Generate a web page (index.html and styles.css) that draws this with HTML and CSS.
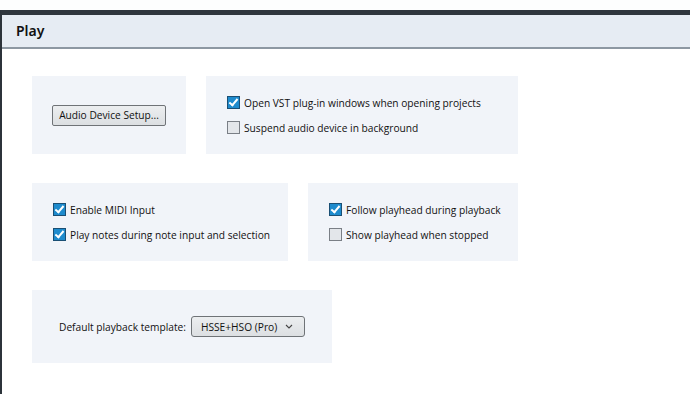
FILE: index.html
```html
<!DOCTYPE html>
<html lang="en">
<head>
    <meta name="viewport" content="width=device-width, initial-scale=1">
    <title>Preferences - Play</title>
    <link rel="stylesheet" href="styles.css">
</head>
<body>
    <div class="topstrip"></div>
    <div class="window">
        <div class="header">Play</div>
        <div class="content">
            <div class="row">
                <div class="card card-device">
                    <button class="btn" type="button">Audio Device Setup...</button>
                </div>
                <div class="card card-vst">
                    <label class="check"><span class="box on"></span>Open VST plug-in windows when opening projects</label>
                    <label class="check"><span class="box"></span>Suspend audio device in background</label>
                </div>
            </div>
            <div class="row">
                <div class="card card-midi">
                    <label class="check"><span class="box on"></span>Enable MIDI Input</label>
                    <label class="check"><span class="box on"></span>Play notes during note input and selection</label>
                </div>
                <div class="card card-playhead">
                    <label class="check"><span class="box on"></span>Follow playhead during playback</label>
                    <label class="check"><span class="box"></span>Show playhead when stopped</label>
                </div>
            </div>
            <div class="row">
                <div class="card card-template">
                    <span class="label">Default playback template:</span>
                    <div class="select">
                        <span>HSSE+HSO (Pro)</span>
                        <svg width="8" height="5" viewBox="0 0 8 5"><path d="M1 1 L4 4 L7 1" fill="none" stroke="#444" stroke-width="1.1"/></svg>
                    </div>
                </div>
            </div>
        </div>
    </div>
</body>
</html>
```

FILE: styles.css
```css
html, body {
    margin: 0;
    padding: 0;
    background: #fff;
}
body {
    font-family: "Open Sans", "Noto Sans", sans-serif;
    font-size: 10.2px;
    color: #111;
    width: 690px;
    height: 394px;
    overflow: hidden;
}
.topstrip {
    height: 10px;
    background: #fdfefe;
}
.window {
    border-left: 2px solid #2c333a;
    border-top: 5px solid #2f363d;
    height: 379px;
}
.header {
    height: 32px;
    line-height: 32px;
    background: #e6ecf3;
    border-bottom: 2px solid #8d98a2;
    padding-left: 14px;
    font-family: "Noto Sans", sans-serif;
    font-size: 14px;
    font-weight: 600;
    color: #111;
}
.content {
    padding: 27px 0 0 30px;
    display: flex;
    flex-direction: column;
    gap: 29px;
}
.row {
    display: flex;
    gap: 20px;
}
.card {
    background: #f1f4f9;
    height: 78px;
    box-sizing: border-box;
    display: flex;
    flex-direction: column;
    justify-content: center;
    gap: 8px;
    padding-left: 21px;
}
.card-device {
    width: 154px;
    padding-left: 0;
    align-items: center;
}
.card-vst {
    width: 312px;
}
.card-midi {
    width: 256px;
}
.card-playhead {
    width: 210px;
}
.card-template {
    width: 300px;
    height: 73px;
    flex-direction: row;
    align-items: center;
    justify-content: flex-start;
    padding-left: 27px;
    gap: 5px;
}
.check {
    display: flex;
    align-items: center;
    gap: 4px;
    height: 17px;
    white-space: nowrap;
}
.box {
    flex-shrink: 0;
    width: 11px;
    height: 11px;
    border: 1px solid #7a7f86;
    background: #e3e6ea;
    position: relative;
}
.box.on {
    background: #1e8bcd;
    border-color: #1a4f74;
}
.box.on::after {
    content: "";
    position: absolute;
    left: 3px;
    top: 0px;
    width: 3px;
    height: 7px;
    border: solid #fff;
    border-width: 0 2px 2px 0;
    transform: rotate(40deg);
}
.btn {
    font-family: inherit;
    font-size: inherit;
    color: #111;
    height: 21px;
    width: 114px;
    padding: 0;
    white-space: nowrap;
    border: 1px solid #6f7377;
    border-radius: 2px;
    background: linear-gradient(#eceef0, #dcdfe2);
}
.select {
    display: flex;
    align-items: center;
    justify-content: space-between;
    flex-shrink: 0;
    width: 114px;
    height: 21px;
    box-sizing: border-box;
    padding: 0 11px 0 9px;
    white-space: nowrap;
    border: 1px solid #6f7377;
    border-radius: 3px;
    background: linear-gradient(#eceef0, #dcdfe2);
}
```
